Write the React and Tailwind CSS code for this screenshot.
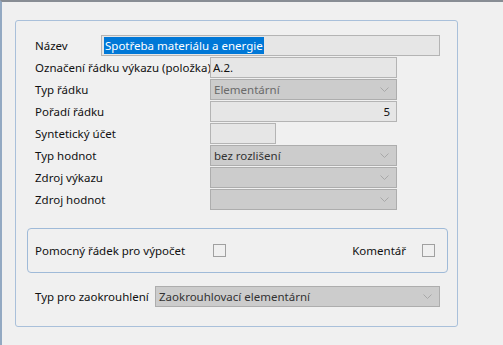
function Chevron() {
  return (
    <svg width="9" height="5" viewBox="0 0 9 5" className="shrink-0">
      <path d="M0.5 0.5 L4.5 4.5 L8.5 0.5" fill="none" stroke="#a8a8a8" strokeWidth="1" />
    </svg>
  );
}

function Field({ className = "", children, right }) {
  return (
    <div
      className={`h-[21px] border border-[#b4b4b4] bg-[#e6e6e6] flex items-center px-[2px] ${
        right ? "justify-end" : ""
      } ${className}`}
    >
      {children}
    </div>
  );
}

function Select({ className = "", text, textClass = "text-[#333]" }) {
  return (
    <div
      className={`h-[21px] border border-[#adadad] bg-[#cccccc] flex items-center justify-between pl-[3px] pr-[7px] ${className}`}
    >
      <span className={textClass}>{text}</span>
      <Chevron />
    </div>
  );
}

function Row({ label, labelW = "w-[175px]", children }) {
  return (
    <div className="flex items-center h-[21px] mb-px">
      <div className={`${labelW} shrink-0 whitespace-nowrap`}>{label}</div>
      {children}
    </div>
  );
}

function Checkbox() {
  return <div className="w-[13px] h-[13px] border border-[#a0a0a0] bg-[#f0f0f0]" />;
}

export default function App() {
  return (
    <div
      className="w-[503px] h-[345px] bg-[#f0f0f0] border-t-2 border-t-[#888d94] border-l-2 border-l-[#93a9c2] pl-[13px] pt-[18px] text-[11.5px] text-[#111] overflow-hidden"
      style={{ fontFamily: '"Noto Sans", sans-serif' }}
    >
      <div className="w-[443px] h-[307px] border border-[#a9c0da] rounded-[3px] pl-[19px] pt-[14px]">
        <Row label="Název" labelW="w-[66px]">
          <Field className="w-[339px]">
            <span className="bg-[#0078d7] text-white leading-[17px] px-px">
              Spotřeba materiálu a energie
            </span>
          </Field>
        </Row>
        <Row label="Označení řádku výkazu (položka)">
          <Field className="w-[187px]">A.2.</Field>
        </Row>
        <Row label="Typ řádku">
          <Select className="w-[187px]" text="Elementární" textClass="text-[#6a6a6a]" />
        </Row>
        <Row label="Pořadí řádku">
          <Field className="w-[187px] pr-[6px]" right>
            5
          </Field>
        </Row>
        <Row label="Syntetický účet">
          <Field className="w-[66px]" />
        </Row>
        <Row label="Typ hodnot">
          <Select className="w-[187px]" text="bez rozlišení" />
        </Row>
        <Row label="Zdroj výkazu">
          <Select className="w-[187px]" text="" />
        </Row>
        <Row label="Zdroj hodnot">
          <Select className="w-[187px]" text="" />
        </Row>

        <div className="-ml-[8px] mt-[18px] w-[421px] h-[45px] border border-[#9fbad8] rounded-[4px] flex items-center pl-[7px] pr-[12px]">
          <div className="w-[178px] whitespace-nowrap">Pomocný řádek pro výpočet</div>
          <Checkbox />
          <div className="flex-1" />
          <div className="mr-[16px]">Komentář</div>
          <Checkbox />
        </div>

        <div className="flex items-center mt-[13px]">
          <div className="w-[120px] shrink-0 whitespace-nowrap">Typ pro zaokrouhlení</div>
          <Select className="w-[285px]" text="Zaokrouhlovací elementární" />
        </div>
      </div>
    </div>
  );
}
